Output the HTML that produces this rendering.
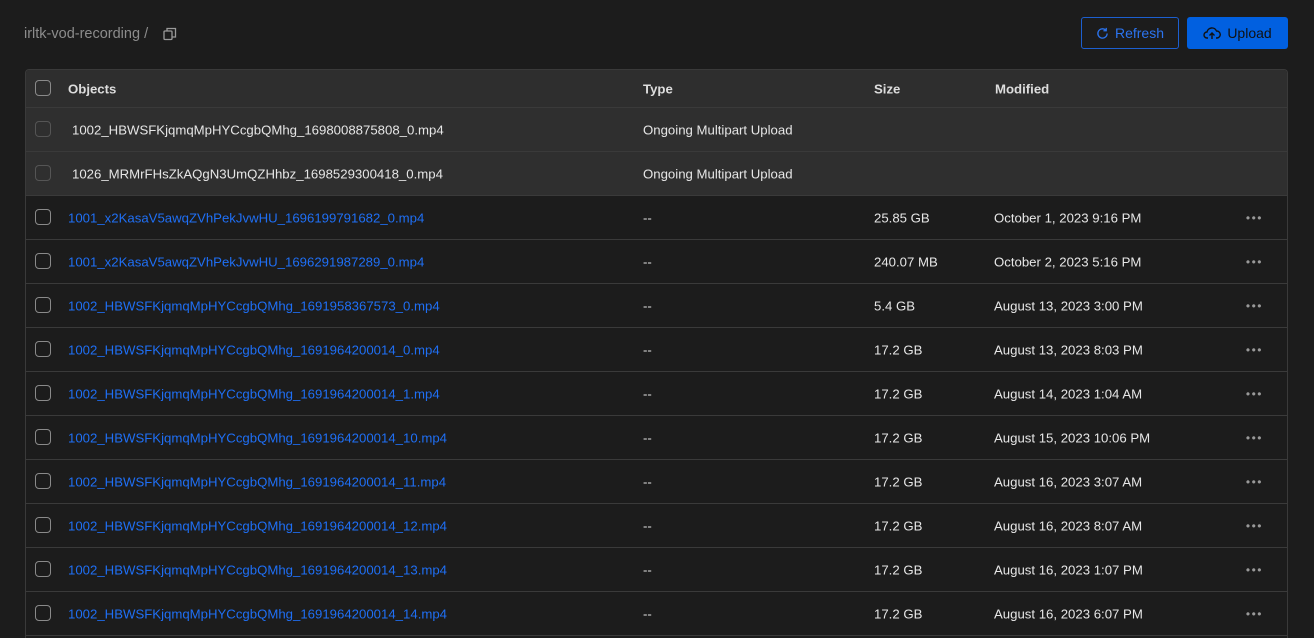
<!DOCTYPE html>
<html style="overflow:hidden;height:638px"><head><style>
body{margin:0;background:#1c1c1c;font-family:"Liberation Sans",sans-serif;font-size:13.2px;color:#e6e6e6;width:1314px;height:638px;overflow:hidden;position:relative}
.crumb{position:absolute;left:24px;top:26px;color:#8c8c8c;font-size:14.5px}
.copy{position:absolute;left:163px;top:27px}
.btn{position:absolute;top:17px;height:32px;border-radius:3px;box-sizing:border-box;font-size:14px;display:flex;align-items:center;justify-content:center;gap:6px}
.ref{left:1081px;width:98px;border:1px solid #1c5fd0;color:#2b74f0}
.up{left:1187px;width:101px;background:#0160e0;color:#111}
.tbl{position:absolute;left:25px;top:69px;width:1261px;height:568px;border:1px solid #3a3a3a;border-bottom:none;border-radius:4px 4px 0 0;overflow:hidden}
.row{height:43px;border-bottom:1px solid #3a3a3a;position:relative}
.hd{background:#2e2e2e;height:37px;font-weight:bold;color:#ddd}
.mp{background:#2f2f2f}
.row span{position:absolute;top:50%;transform:translateY(-50%);white-space:nowrap}
.cb{position:absolute;left:9px;top:50%;margin-top:-9px;width:14px;height:14px;border:1.5px solid #8a8a8a;border-radius:4px}
.mp .cb{border-color:#555}
.a{color:#1f6ff5}
.dots{right:24px;color:#999;letter-spacing:1.5px;font-size:12px}
</style></head><body>
<div class="crumb">irltk-vod-recording /</div>
<svg class="copy" width="14" height="14" viewBox="0 0 14 14" fill="none" stroke="#9a9a9a" stroke-width="1.3"><rect x="1" y="4" width="8" height="8.5" rx="1"/><path d="M4 4V1.5h8.5V10H9"/></svg>
<div class="btn ref"><svg width="13" height="13" viewBox="0 0 14 14" fill="none" stroke="#2b74f0" stroke-width="1.4"><path d="M12 7a5 5 0 1 1-1.5-3.6"/><path d="M11 1v3h-3"/></svg>Refresh</div>
<div class="btn up"><svg width="18" height="14" viewBox="0 0 18 14" fill="none" stroke="#111" stroke-width="1.4"><path d="M5 12H4a3 3 0 0 1 0-6 5 5 0 0 1 9.5-1A3.5 3.5 0 0 1 14 12h-1"/><path d="M9 13V7M6.5 9.5 9 7l2.5 2.5"/></svg>Upload</div>
<div class="tbl">
<div class="row hd"><div class="cb"></div><span style="left:42px">Objects</span><span style="left:617px">Type</span><span style="left:848px">Size</span><span style="left:969px">Modified</span></div>
<div class="row mp"><div class="cb"></div><span style="left:46px">1002_HBWSFKjqmqMpHYCcgbQMhg_1698008875808_0.mp4</span><span style="left:617px">Ongoing Multipart Upload</span></div>
<div class="row mp"><div class="cb"></div><span style="left:46px">1026_MRMrFHsZkAQgN3UmQZHhbz_1698529300418_0.mp4</span><span style="left:617px">Ongoing Multipart Upload</span></div>
<div class="row"><div class="cb"></div><span class="a" style="left:42px">1001_x2KasaV5awqZVhPekJvwHU_1696199791682_0.mp4</span><span style="left:617px">--</span><span style="left:848px">25.85 GB</span><span style="left:968px">October 1, 2023 9:16 PM</span><span class="dots">•••</span></div>
<div class="row"><div class="cb"></div><span class="a" style="left:42px">1001_x2KasaV5awqZVhPekJvwHU_1696291987289_0.mp4</span><span style="left:617px">--</span><span style="left:848px">240.07 MB</span><span style="left:968px">October 2, 2023 5:16 PM</span><span class="dots">•••</span></div>
<div class="row"><div class="cb"></div><span class="a" style="left:42px">1002_HBWSFKjqmqMpHYCcgbQMhg_1691958367573_0.mp4</span><span style="left:617px">--</span><span style="left:848px">5.4 GB</span><span style="left:968px">August 13, 2023 3:00 PM</span><span class="dots">•••</span></div>
<div class="row"><div class="cb"></div><span class="a" style="left:42px">1002_HBWSFKjqmqMpHYCcgbQMhg_1691964200014_0.mp4</span><span style="left:617px">--</span><span style="left:848px">17.2 GB</span><span style="left:968px">August 13, 2023 8:03 PM</span><span class="dots">•••</span></div>
<div class="row"><div class="cb"></div><span class="a" style="left:42px">1002_HBWSFKjqmqMpHYCcgbQMhg_1691964200014_1.mp4</span><span style="left:617px">--</span><span style="left:848px">17.2 GB</span><span style="left:968px">August 14, 2023 1:04 AM</span><span class="dots">•••</span></div>
<div class="row"><div class="cb"></div><span class="a" style="left:42px">1002_HBWSFKjqmqMpHYCcgbQMhg_1691964200014_10.mp4</span><span style="left:617px">--</span><span style="left:848px">17.2 GB</span><span style="left:968px">August 15, 2023 10:06 PM</span><span class="dots">•••</span></div>
<div class="row"><div class="cb"></div><span class="a" style="left:42px">1002_HBWSFKjqmqMpHYCcgbQMhg_1691964200014_11.mp4</span><span style="left:617px">--</span><span style="left:848px">17.2 GB</span><span style="left:968px">August 16, 2023 3:07 AM</span><span class="dots">•••</span></div>
<div class="row"><div class="cb"></div><span class="a" style="left:42px">1002_HBWSFKjqmqMpHYCcgbQMhg_1691964200014_12.mp4</span><span style="left:617px">--</span><span style="left:848px">17.2 GB</span><span style="left:968px">August 16, 2023 8:07 AM</span><span class="dots">•••</span></div>
<div class="row"><div class="cb"></div><span class="a" style="left:42px">1002_HBWSFKjqmqMpHYCcgbQMhg_1691964200014_13.mp4</span><span style="left:617px">--</span><span style="left:848px">17.2 GB</span><span style="left:968px">August 16, 2023 1:07 PM</span><span class="dots">•••</span></div>
<div class="row"><div class="cb"></div><span class="a" style="left:42px">1002_HBWSFKjqmqMpHYCcgbQMhg_1691964200014_14.mp4</span><span style="left:617px">--</span><span style="left:848px">17.2 GB</span><span style="left:968px">August 16, 2023 6:07 PM</span><span class="dots">•••</span></div>
</div>
</body></html>
